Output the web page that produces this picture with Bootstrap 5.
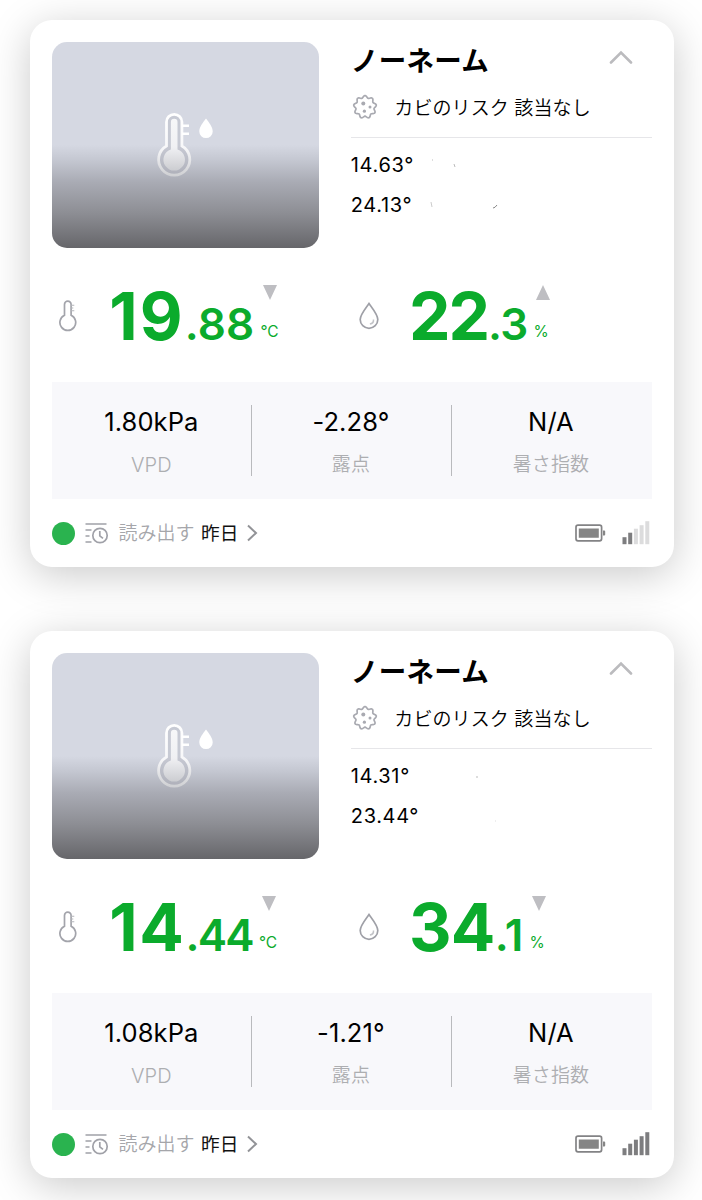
<!DOCTYPE html>
<html lang="ja">
<head>
<meta charset="utf-8">
<meta name="viewport" content="width=device-width, initial-scale=1">
<title>センサー</title>
<link href="https://cdn.jsdelivr.net/npm/bootstrap@5.3.0/dist/css/bootstrap.min.css" rel="stylesheet">
<style>
body{background:#fff;font-family:Inter,"Noto Sans CJK JP",sans-serif;color:#000;overflow:hidden;height:1200px}
.sensors{padding:19.5px 28.5px 0 30px;gap:63.5px}
.sensor{--bs-card-border-width:0;--bs-card-border-radius:22px;height:547.5px;padding:22.5px 22px 0 22.3px;box-shadow:0 8px 42px rgba(0,0,0,.21)}
.photo{width:266.5px;height:206px;border-radius:15px;background:linear-gradient(#d5d8e2 0 50%,#c5c8d2 57%,#a9abb4 68%,#8d8e94 83%,#66666a);padding:68px 0 0 104px}
.photo svg{display:block}
.info{margin-left:32px}
.title-row{height:36px;margin-top:1px}
.name{font-size:27.5px;font-weight:700;line-height:36px;margin:0;letter-spacing:.35px}
.arrow{margin:0 18.5px 8px 0}
.risk{height:30px;margin-top:13px;font-size:19px;line-height:30px;padding-left:1px}
.risk span{margin:3px 0 0 16.5px;white-space:pre;letter-spacing:.1px;font-weight:350}
.info hr{margin:14.5px 0 7.5px;border-top:1px solid #e6e6e9;opacity:1}
.reading{font-size:20px;height:40px;line-height:40px;letter-spacing:.65px}
.reading svg{margin-left:16px}
.metrics{height:92px}
.metric{padding-left:7px}
.ico{width:50px;height:48px}
.big{font-size:66px;font-weight:700;line-height:48px;color:#0bab2c}
.dec{font-size:44px;font-weight:600;line-height:32px;color:#0bab2c}
.unit{font-size:15.5px;line-height:11px;color:#0bab2c;margin:0 0 3.5px 6px}
.unit svg{margin:0 0 26px 3px;display:block}
.stats{height:117px;margin-top:42px;background:#f8f8fb;padding-top:23px}
.stat{height:71px}
.stat + .stat{border-left:1px solid #b9babd}
.stat:nth-child(n+2) > *{margin-left:-2px}
.stat:nth-child(1) > *{margin-left:-1px}
.val{font-size:25.5px;line-height:34px;letter-spacing:.1px}
.lab{font-size:19px;line-height:28px;color:#adaeb1;margin-top:12px;font-weight:350;letter-spacing:.1px}
.stat:nth-child(1) .lab{font-size:20px;font-weight:300}
.foot{height:30px;margin-top:19px;font-size:19px;line-height:30px}
.dot{width:23px;height:23px;background:#2ab34f;margin-left:-.3px}
.foot .log{margin-left:9.5px}
.foot .txt{color:#a5a6aa;font-weight:350;margin:2px 0 0 10px}
.foot b{font-weight:400;color:#111;margin:1px 0 0 6.5px;font-size:18.7px}
</style>
</head>
<body>
<svg width="0" height="0" class="position-absolute" aria-hidden="true">
<defs>
<linearGradient id="g" x1="0" y1="0" x2="0" y2="1"><stop offset="0" stop-color="#fff"/><stop offset=".55" stop-color="#f7f7f9"/><stop offset="1" stop-color="#d0d1d4"/></linearGradient>
<symbol id="hero" viewBox="0 0 60 70">
<path d="M10.500 36V12a7.700 7.700 0 0 1 15.400 0V36A15.600 15.600 0 1 1 10.500 36Z" fill="#a8aab2" fill-opacity=".3" stroke="url(#g)" stroke-width="2.800"/>
<path d="M14.900 39.500V12a3.300 3.300 0 0 1 6.600 0V39.500A10.800 10.800 0 1 1 14.900 39.500Z" fill="url(#g)" fill-opacity=".85"/>
<path d="M26 15.700h7M26 23.700h7" stroke="#fff" stroke-width="2.600"/>
<path d="M50 8.500c3 4 6.700 8.500 6.700 12.900a6.700 6.700 0 0 1-13.400 0c0-4.400 3.700-8.900 6.700-12.900Z" fill="#fff"/>
</symbol>
<symbol id="up" viewBox="0 0 24 14"><path d="M2 12.500 12 2.500l10 10" fill="none" stroke="#bbbbbe" stroke-width="2.600" stroke-linecap="round"/></symbol>
<symbol id="mold" viewBox="0 0 26 26"><path id="moldEdge" fill="#fff" stroke="#a9aab1" stroke-width="1.700" stroke-linejoin="round"/><g fill="#a9aab1"><circle cx="11.300" cy="9.600" r="2"/><circle cx="18" cy="13" r="1.500"/><circle cx="12.400" cy="17.200" r="1.600"/></g></symbol>
<symbol id="thermo" viewBox="0 0 18 32"><path d="M5.500 15.300V4.500a3.300 3.300 0 0 1 6.600 0V15.300A7.900 7.900 0 1 1 5.500 15.300Z" fill="none" stroke="#a3a4ab" stroke-width="1.700"/><path d="M12 5.300h3.300M12 8h2.300M12 10.800h3.300" stroke="#b4b5ba" stroke-width="1.100"/></symbol>
<symbol id="drop" viewBox="0 0 20 28"><path d="M10 1.500c3.500 5 8.800 11 8.800 16a8.800 8.800 0 0 1-17.600 0c0-5 5.300-11 8.800-16Z" fill="none" stroke="#9fa0a7" stroke-width="1.700"/><path d="M14.500 17.500c.2 2.600-1.200 4.200-3.600 4.600" fill="none" stroke="#c2c3c7" stroke-width="1.500"/></symbol>
<symbol id="log" viewBox="0 0 24 22"><g fill="none" stroke="#a0a1a8" stroke-width="1.700"><path d="M.5 2h21M.5 8h6M.5 14h4M.5 20h6"/><circle cx="15" cy="13.500" r="7.200"/><path d="M14.800 9v4.800l3.200 2.600"/></g></symbol>
<symbol id="next" viewBox="0 0 12 18"><path d="M2 1.500 10 9l-8 7.500" fill="none" stroke="#929397" stroke-width="2"/></symbol>
<symbol id="batt" viewBox="0 0 31 18"><rect x="1" y="1.200" width="25.600" height="15.600" rx="2" fill="#fff" stroke="#838385" stroke-width="1.700"/><path d="M3.800 4.500h20v9.200h-20zM28 6.500h1.200q1 0 1 1v3q0 1-1 1H28z" fill="#858585"/></symbol>
</defs>
</svg>
<main class="sensors d-flex flex-column" id="list"></main>
<script src="https://cdn.jsdelivr.net/npm/bootstrap@5.3.0/dist/js/bootstrap.bundle.min.js"></script>
<script>
const edge = Array.from({length:90},(_,i)=>{const t=i*Math.PI/45,r=10.3+1.15*Math.cos(9*t);return (13+r*Math.sin(t)).toFixed(2)+' '+(13-r*Math.cos(t)).toFixed(2);});
document.getElementById('moldEdge').setAttribute('d','M'+edge.join('L')+'Z');
// each reading: whole part, decimals, tracking of either in px
const sensors = [
 {a:'14.63°',b:'24.13°',t:['19','.88',2,.2],h:['22','.3',-2,-.8],hUp:true,v:['1.80kPa','-2.28°'],bars:2,
  m1:'<path d="M2 5h1M24 9l1 3" stroke="#bbb"/>',m2:'<path d="M3 7l1 5" stroke="#ccc"/><path d="M65 13q2 0 4-3" stroke="#888"/>'},
 {a:'14.31°',b:'23.44°',t:['14','.44',1.5,-1.7],h:['34','.1',-.7,0],hUp:false,v:['1.08kPa','-1.21°'],bars:5,
  m1:'<path d="M50 11h2" stroke="#bbb"/>',m2:'<path d="M60 15h1" stroke="#ddd"/>'}
];
const ic = (id,w,h,c='') => `<svg class="${c} flex-shrink-0" width="${w}" height="${h}"><use href="#${id}"/></svg>`;
const tri = up => `<svg width="14" height="15"><path d="${up?'M7 0 14 15H0Z':'M0 0H14L7 15Z'}" fill="#bebec2"/></svg>`;
const marks = s => `<svg width="80" height="20" fill="none">${s}</svg>`;
const metric = (icon,n,unit,up) => `<div class="col metric d-flex align-items-end"><div class="ico d-flex align-items-center">${icon}</div>
 <span class="big" style="letter-spacing:${n[2]}px">${n[0]}</span><span class="dec" style="letter-spacing:${n[3]}px">${n[1]}</span><div class="unit">${tri(up)}${unit}</div></div>`;
const stat = (v,l) => `<div class="col stat text-center"><div class="val">${v}</div><div class="lab">${l}</div></div>`;
document.getElementById('list').innerHTML = sensors.map(s => `
<section class="card sensor">
 <div class="d-flex">
  <div class="photo flex-shrink-0">${ic('hero',60,70)}</div>
  <div class="info flex-grow-1">
   <div class="title-row d-flex justify-content-between align-items-center"><h2 class="name">ノーネーム</h2>${ic('up',24,14,'arrow')}</div>
   <div class="risk d-flex align-items-center">${ic('mold',26,26)}<span>カビのリスク 該当なし</span></div>
   <hr>
   <div class="reading d-flex align-items-center">${s.a}${marks(s.m1)}</div>
   <div class="reading d-flex align-items-center">${s.b}${marks(s.m2)}</div>
  </div>
 </div>
 <div class="metrics row g-0">${metric(ic('thermo',18,32),s.t,'°C',false)}${metric(ic('drop',20,28),s.h,'%',s.hUp)}</div>
 <div class="stats row g-0">${stat(s.v[0],'VPD')}${stat(s.v[1],'露点')}${stat('N/A','暑さ指数')}</div>
 <div class="foot d-flex align-items-center">
  <span class="dot rounded-circle"></span>${ic('log',24,22,'log')}<span class="txt">読み出す</span><b>昨日</b>${ic('next',12,18,'ms-2')}
  ${ic('batt',31,18,'ms-auto me-3')}
  <svg class="me-1" width="26" height="23" overflow="visible">${[16,11.5,7.5,4,0].map((y,i)=>`<rect x="${.5+i*5.7}" y="${y-.8}" width="4" height="${23-y}" fill="${i<s.bars?'#7d7d7f':'#dcdcdd'}"/>`).join('')}</svg>
 </div>
</section>`).join('');
</script>
</body>
</html>
